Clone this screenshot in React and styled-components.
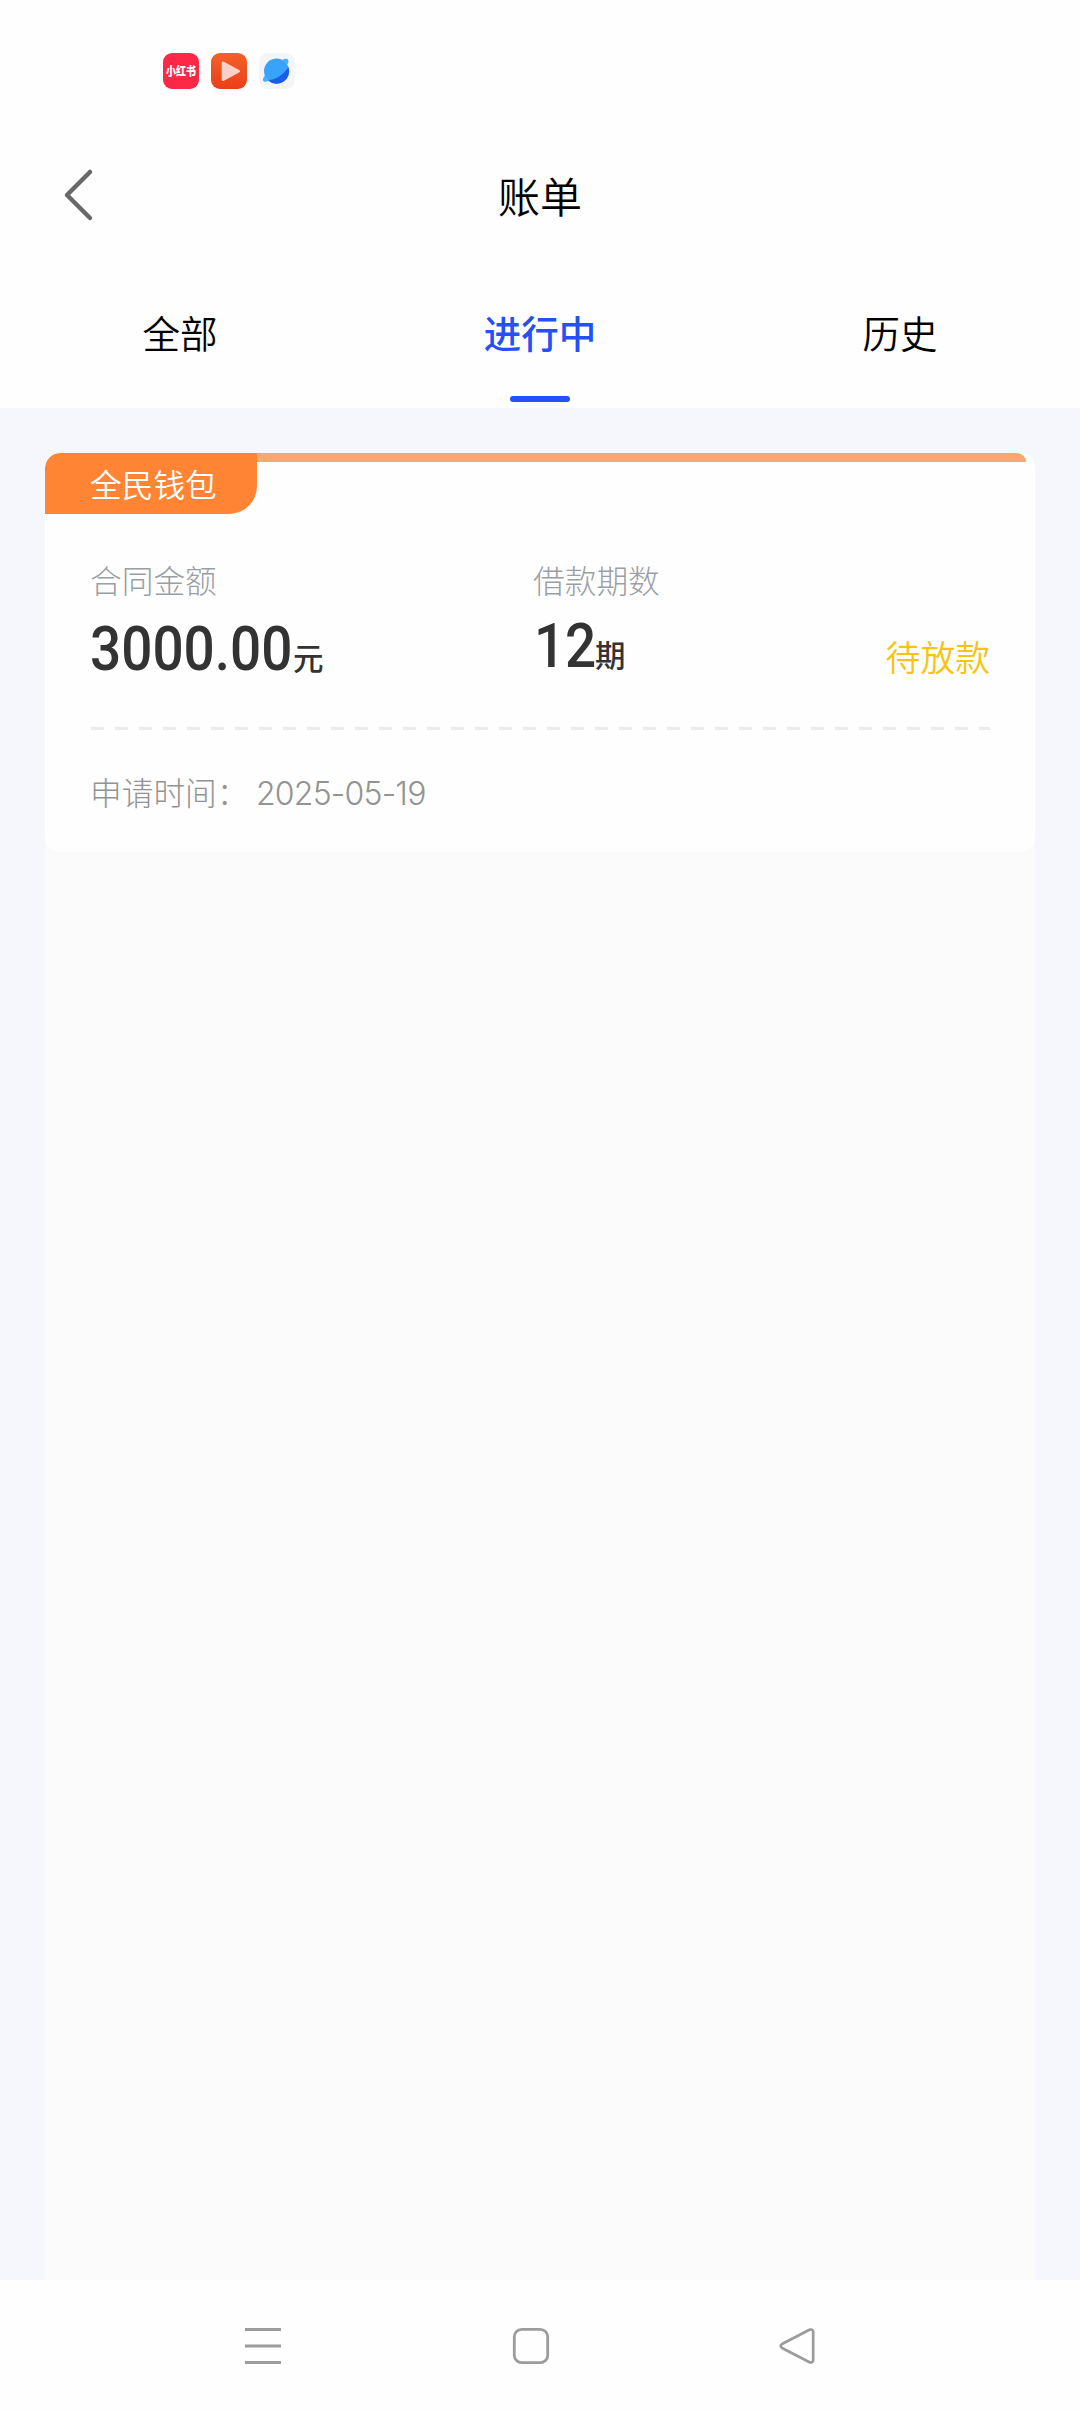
import React, { useState } from "react";
import styled, { createGlobalStyle } from "styled-components";

const GlobalStyle = createGlobalStyle`
  * {
    box-sizing: border-box;
  }

  body {
    margin: 0;
    background: #fff;
    font-family: Inter, "Noto Sans CJK SC", sans-serif;
  }
`;

const Screen = styled.div`
  width: 1080px;
  height: 2412px;
  display: flex;
  flex-direction: column;
  background: #fefefe;
`;

const StatusBar = styled.div`
  height: 142px;
  padding: 53px 0 0 163px;
  display: flex;
  align-items: flex-start;
  gap: 12px;
`;

const AppBadge = styled.div`
  width: 36px;
  height: 36px;
  border-radius: 9px;
  display: flex;
  align-items: center;
  justify-content: center;
  overflow: hidden;
  background: ${({ $bg }) => $bg};
`;

const BadgeText = styled.span`
  color: #fff;
  font-family: "Noto Sans CJK SC", sans-serif;
  font-size: 10px;
  font-weight: 900;
  line-height: 12px;
  white-space: nowrap;
  transform: scaleY(1.2);
`;

const Header = styled.header`
  height: 110px;
  padding: 0 62px;
  display: grid;
  grid-template-columns: 1fr auto 1fr;
  align-items: center;
`;

const BackButton = styled.button`
  width: 34px;
  height: 56px;
  padding: 0;
  border: 0;
  background: none;
  display: flex;
  margin-top: -5px;
`;

const Title = styled.h1`
  margin: 2px 0 0;
  color: #000;
  font-size: 42px;
  font-weight: 350;
  line-height: 60px;
`;

const Tabs = styled.nav`
  height: 156px;
  display: grid;
  grid-template-columns: repeat(3, 1fr);
`;

const Tab = styled.button`
  padding: 56px 0 6px;
  border: 0;
  background: none;
  display: flex;
  flex-direction: column;
  align-items: center;
  justify-content: space-between;
  font-family: inherit;
  font-size: 37.5px;
  line-height: 54px;
  font-weight: ${({ $active }) => ($active ? 500 : 350)};
  color: ${({ $active }) => ($active ? "#2450f5" : "#000")};

  &::after {
    content: "";
    width: 60px;
    height: 6px;
    border-radius: 3px;
    background: ${({ $active }) => ($active ? "#2450ff" : "transparent")};
  }
`;

const Content = styled.main`
  flex: 1;
  padding: 45px 45px 0;
  display: flex;
  background: #f5f7fd;
`;

const List = styled.div`
  flex: 1;
  background: linear-gradient(#f5f7fd 200px, #fbfbfb 200px);
`;

const Card = styled.article`
  height: 399px;
  border-radius: 15px;
  overflow: hidden;
  background: #fefefe;
`;

const CardTop = styled.div`
  height: 61px;
  display: flex;
  align-items: flex-start;
`;

const Tag = styled.div`
  width: 212px;
  height: 61px;
  padding-left: 45px;
  border-radius: 15px 0 28px 0;
  background: #ff8534;
  color: #fff;
  font-size: 31.7px;
  font-weight: 350;
  line-height: 65px;
`;

const Stripe = styled.div`
  width: 769px;
  height: 9px;
  border-radius: 0 9px 0 0;
  background: #ffa670;
`;

const CardBody = styled.div`
  padding: 0 45px;
`;

const Terms = styled.div`
  height: 213px;
  padding-top: 45px;
  display: grid;
  grid-template-columns: 443px 1fr auto;
`;

const Label = styled.div`
  color: #9a9ea6;
  font-size: 31.7px;
  font-weight: 300;
  line-height: 46px;
`;

const Value = styled.div`
  height: 60px;
  display: flex;
  align-items: baseline;
  color: #333;
  margin-top: ${({ $shift }) => $shift}px;
`;

const Figure = styled.span`
  width: ${({ $width }) => $width}px;
  padding-left: ${({ $inset }) => $inset || 0}px;
  font-family: Roboto, sans-serif;
  font-size: 61px;
  font-weight: 500;
  line-height: 60px;
  white-space: nowrap;
  transform: scaleX(0.9);
  transform-origin: left;
`;

const Unit = styled.span`
  font-size: 30.5px;
  font-weight: 500;
  line-height: 40px;
`;

const Status = styled.div`
  padding-top: 74px;
  color: #f7c413;
  font-size: 34.8px;
  font-weight: 350;
  line-height: 50px;
`;

const Divider = styled.div`
  height: 3px;
  margin-left: 1px;
  background: repeating-linear-gradient(
    90deg,
    #ebebeb 0 13px,
    transparent 13px 24px
  );
`;

const Applied = styled.div`
  padding-top: 40px;
  display: flex;
  color: #939393;
  font-size: 31.7px;
  font-weight: 300;
  line-height: 48px;
`;

const AppliedLabel = styled.span`
  width: 166px;
`;

const AppliedDate = styled.span`
  font-size: 32px;
  letter-spacing: -0.8px;
`;

const SystemNav = styled.footer`
  height: 132px;
  padding: 46px 263px 0 243px;
  display: flex;
  align-items: flex-start;
`;

const NavKey = styled.button`
  width: 40px;
  height: 40px;
  margin-right: ${({ $gap }) => $gap || 0}px;
  padding: 0;
  border: 0;
  background: none;
  display: flex;
`;

const tabs = ["全部", "进行中", "历史"];

const App = () => {
  const [active, setActive] = useState("进行中");

  return (
    <>
      <GlobalStyle />
      <Screen>
        <StatusBar>
          <AppBadge $bg="#fd2846">
            <BadgeText>小红书</BadgeText>
          </AppBadge>
          <AppBadge $bg="linear-gradient(#f3602a, #ea3f1a)">
            <svg width="36" height="36" viewBox="0 0 36 36">
              <path
                d="M12.200 10v16.500l15.300-8.200z"
                fill="#fcd0c6"
                stroke="#fcd0c6"
                strokeWidth="3"
                strokeLinejoin="round"
              />
            </svg>
          </AppBadge>
          <AppBadge $bg="#f4f5f7">
            <svg width="36" height="36" viewBox="0 0 36 36">
              <circle cx="17.500" cy="18" r="12.500" fill="#38a3fb" />
              <path
                d="M29.500 14A12.500 12.500 0 0 1 9 27.200C17 27 25 21 29.500 14z"
                fill="#1c5de8"
              />
              <path
                d="M23 7c4-2.500 8.500-1.500 5.500 4.500zM6 22c-3.500 5-2.500 8.500 4 6z"
                fill="#49b0ff"
              />
            </svg>
          </AppBadge>
        </StatusBar>

        <Header>
          <BackButton aria-label="返回">
            <svg width="34" height="56" viewBox="0 0 34 56" fill="none">
              <path
                d="M28 5L5 28l23 23"
                stroke="#686868"
                strokeWidth="4.500"
                strokeLinecap="round"
                strokeLinejoin="round"
              />
            </svg>
          </BackButton>
          <Title>账单</Title>
        </Header>

        <Tabs>
          {tabs.map((tab) => (
            <Tab key={tab} $active={tab === active} onClick={() => setActive(tab)}>
              {tab}
            </Tab>
          ))}
        </Tabs>

        <Content>
          <List>
            <Card>
              <CardTop>
                <Tag>全民钱包</Tag>
                <Stripe />
              </CardTop>
              <CardBody>
                <Terms>
                  <div>
                    <Label>合同金额</Label>
                    <Value $shift={14}>
                      <Figure $width={203}>3000.00</Figure>
                      <Unit>元</Unit>
                    </Value>
                  </div>
                  <div>
                    <Label>借款期数</Label>
                    <Value $shift={11}>
                      <Figure $width={62} $inset={1}>
                        12
                      </Figure>
                      <Unit>期</Unit>
                    </Value>
                  </div>
                  <Status>待放款</Status>
                </Terms>
                <Divider />
                <Applied>
                  <AppliedLabel>申请时间：</AppliedLabel>
                  <AppliedDate>2025-05-19</AppliedDate>
                </Applied>
              </CardBody>
            </Card>
          </List>
        </Content>

        <SystemNav>
          <NavKey $gap={228} aria-label="menu">
            <svg width="40" height="40" viewBox="0 0 40 40" stroke="#9c9c9c" strokeWidth="3">
              <path d="M2 3.500h36M2 20h36M2 36.500h36" />
            </svg>
          </NavKey>
          <NavKey $gap={226} aria-label="home">
            <svg width="40" height="40" viewBox="0 0 40 40" fill="none">
              <rect
                x="3.300"
                y="3.300"
                width="33.400"
                height="33.400"
                rx="7.500"
                stroke="#9c9c9c"
                strokeWidth="2.800"
              />
            </svg>
          </NavKey>
          <NavKey aria-label="back">
            <svg width="40" height="40" viewBox="0 0 40 40" fill="none">
              <path
                d="M32.500 3.800L5 18Q2.500 20 5 22L32.500 36.200Q36.200 37 36.200 34V6Q36.200 3 32.500 3.800z"
                stroke="#9c9c9c"
                strokeWidth="2.700"
                strokeLinejoin="round"
              />
            </svg>
          </NavKey>
        </SystemNav>
      </Screen>
    </>
  );
};

export default App;
